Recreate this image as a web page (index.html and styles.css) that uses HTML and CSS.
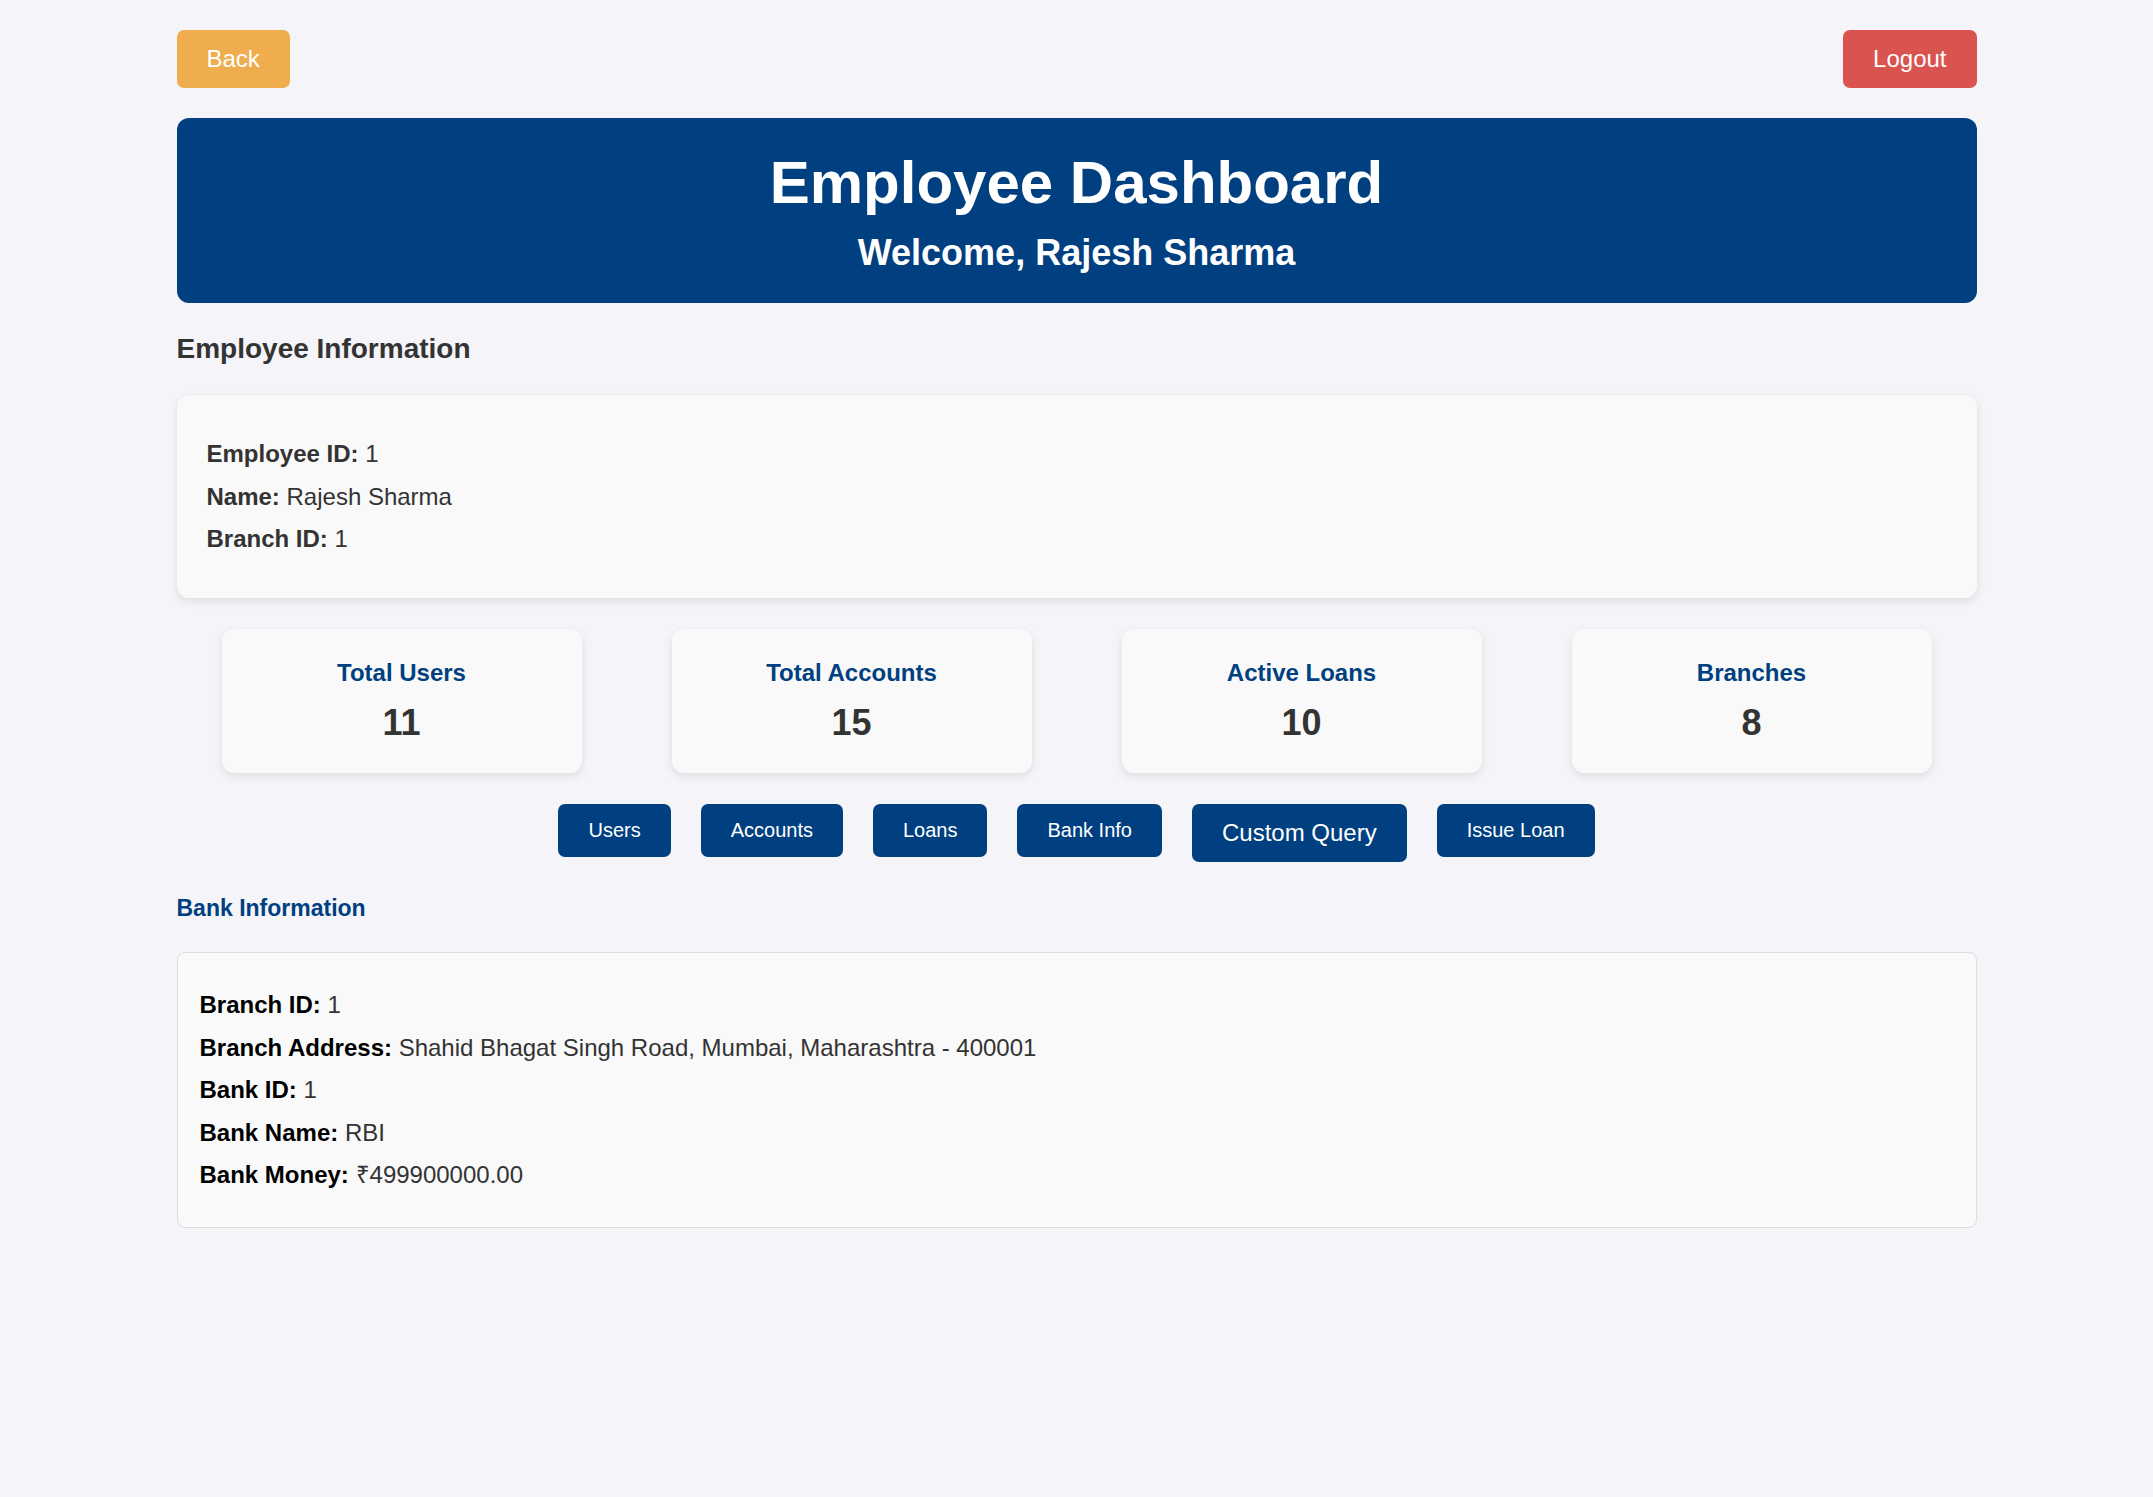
FILE: index.html
```html
<!DOCTYPE html>
<html lang="en">
<head>
<meta charset="utf-8">
<title>Employee Dashboard</title>
<link rel="stylesheet" href="styles.css">
</head>
<body>
<div class="container">
  <div class="topbar">
    <button class="btn btn-back">Back</button>
    <button class="btn btn-logout">Logout</button>
  </div>

  <header class="hero">
    <h1>Employee Dashboard</h1>
    <h2>Welcome, Rajesh Sharma</h2>
  </header>

  <h3 class="section-title">Employee Information</h3>
  <div class="info-card">
    <p><strong>Employee ID:</strong> 1</p>
    <p><strong>Name:</strong> Rajesh Sharma</p>
    <p><strong>Branch ID:</strong> 1</p>
  </div>

  <div class="stats">
    <div class="stat-card">
      <h3>Total Users</h3>
      <div class="stat-num">11</div>
    </div>
    <div class="stat-card">
      <h3>Total Accounts</h3>
      <div class="stat-num">15</div>
    </div>
    <div class="stat-card">
      <h3>Active Loans</h3>
      <div class="stat-num">10</div>
    </div>
    <div class="stat-card">
      <h3>Branches</h3>
      <div class="stat-num">8</div>
    </div>
  </div>

  <div class="nav">
    <button class="nav-btn">Users</button>
    <button class="nav-btn">Accounts</button>
    <button class="nav-btn">Loans</button>
    <button class="nav-btn">Bank Info</button>
    <button class="nav-btn nav-btn-lg">Custom Query</button>
    <button class="nav-btn">Issue Loan</button>
  </div>

  <h3 class="bank-title">Bank Information</h3>
  <div class="bank-card">
    <p><strong>Branch ID:</strong> 1</p>
    <p><strong>Branch Address:</strong> Shahid Bhagat Singh Road, Mumbai, Maharashtra - 400001</p>
    <p><strong>Bank ID:</strong> 1</p>
    <p><strong>Bank Name:</strong> RBI</p>
    <p><strong>Bank Money:</strong> ₹499900000.00</p>
  </div>
</div>
</body>
</html>
```

FILE: styles.css
```css
* { box-sizing: border-box; }

html, body {
  margin: 0;
  background: #f4f4f9;
}

body {
  padding: 30px;
  font-family: "Liberation Sans", Arial, sans-serif;
  color: #333;
}

.container {
  max-width: 1800px;
  margin: 0 auto;
}

.topbar {
  display: flex;
  justify-content: space-between;
  align-items: flex-start;
  margin-bottom: 30px;
}

.btn {
  font-family: "Liberation Sans", Arial, sans-serif;
  font-size: 24px;
  line-height: 1.15;
  color: #fff;
  border: none;
  border-radius: 7px;
  padding: 15px 30px;
}

.btn-back { background: #f0ad4e; }
.btn-logout { background: #d9534f; }

.hero {
  background: #004080;
  color: #fff;
  text-align: center;
  padding: 30px;
  border-radius: 12px;
  margin-bottom: 30px;
}

.hero h1 {
  margin: 0 0 15px;
  font-size: 60px;
  font-weight: bold;
  line-height: 1.15;
}

.hero h2 {
  margin: 0;
  font-size: 36px;
  font-weight: bold;
  line-height: 1.15;
}

.section-title {
  font-size: 28px;
  margin: 0 0 30px;
  color: #333;
  line-height: 1.15;
}

.info-card {
  background: #f9f9f9;
  border-radius: 12px;
  padding: 30px;
  box-shadow: 0 3px 8px rgba(0, 0, 0, 0.1);
}

.info-card p,
.bank-card p {
  margin: 15px 0;
  font-size: 24px;
  line-height: 1.15;
}

.stats {
  display: flex;
  justify-content: space-around;
  margin: 31px 0 31px;
}

.stat-card {
  width: 360px;
  background: #f9f9f9;
  border-radius: 12px;
  padding: 30px;
  text-align: center;
  box-shadow: 0 3px 8px rgba(0, 0, 0, 0.1);
}

.stat-card h3 {
  margin: 0;
  font-size: 24px;
  color: #004080;
  line-height: 1.15;
}

.stat-num {
  margin-top: 15px;
  font-size: 36px;
  font-weight: bold;
  color: #333;
  line-height: 1.15;
}

.nav {
  display: flex;
  justify-content: center;
  align-items: flex-start;
  gap: 30px;
  margin-bottom: 33px;
}

.nav-btn {
  font-family: "Liberation Sans", Arial, sans-serif;
  font-size: 20px;
  line-height: 1.15;
  background: #004080;
  color: #fff;
  border: none;
  border-radius: 7px;
  padding: 15px 30px;
}

.nav-btn-lg { font-size: 24px; }

.bank-title {
  font-size: 23px;
  color: #004080;
  margin: 0 0 31px;
  line-height: 1.15;
}

.bank-card {
  background: #f9f9f9;
  border: 1px solid #ddd;
  border-radius: 8px;
  padding: 23px 22px;
}

.bank-card strong { color: #000; }
```
